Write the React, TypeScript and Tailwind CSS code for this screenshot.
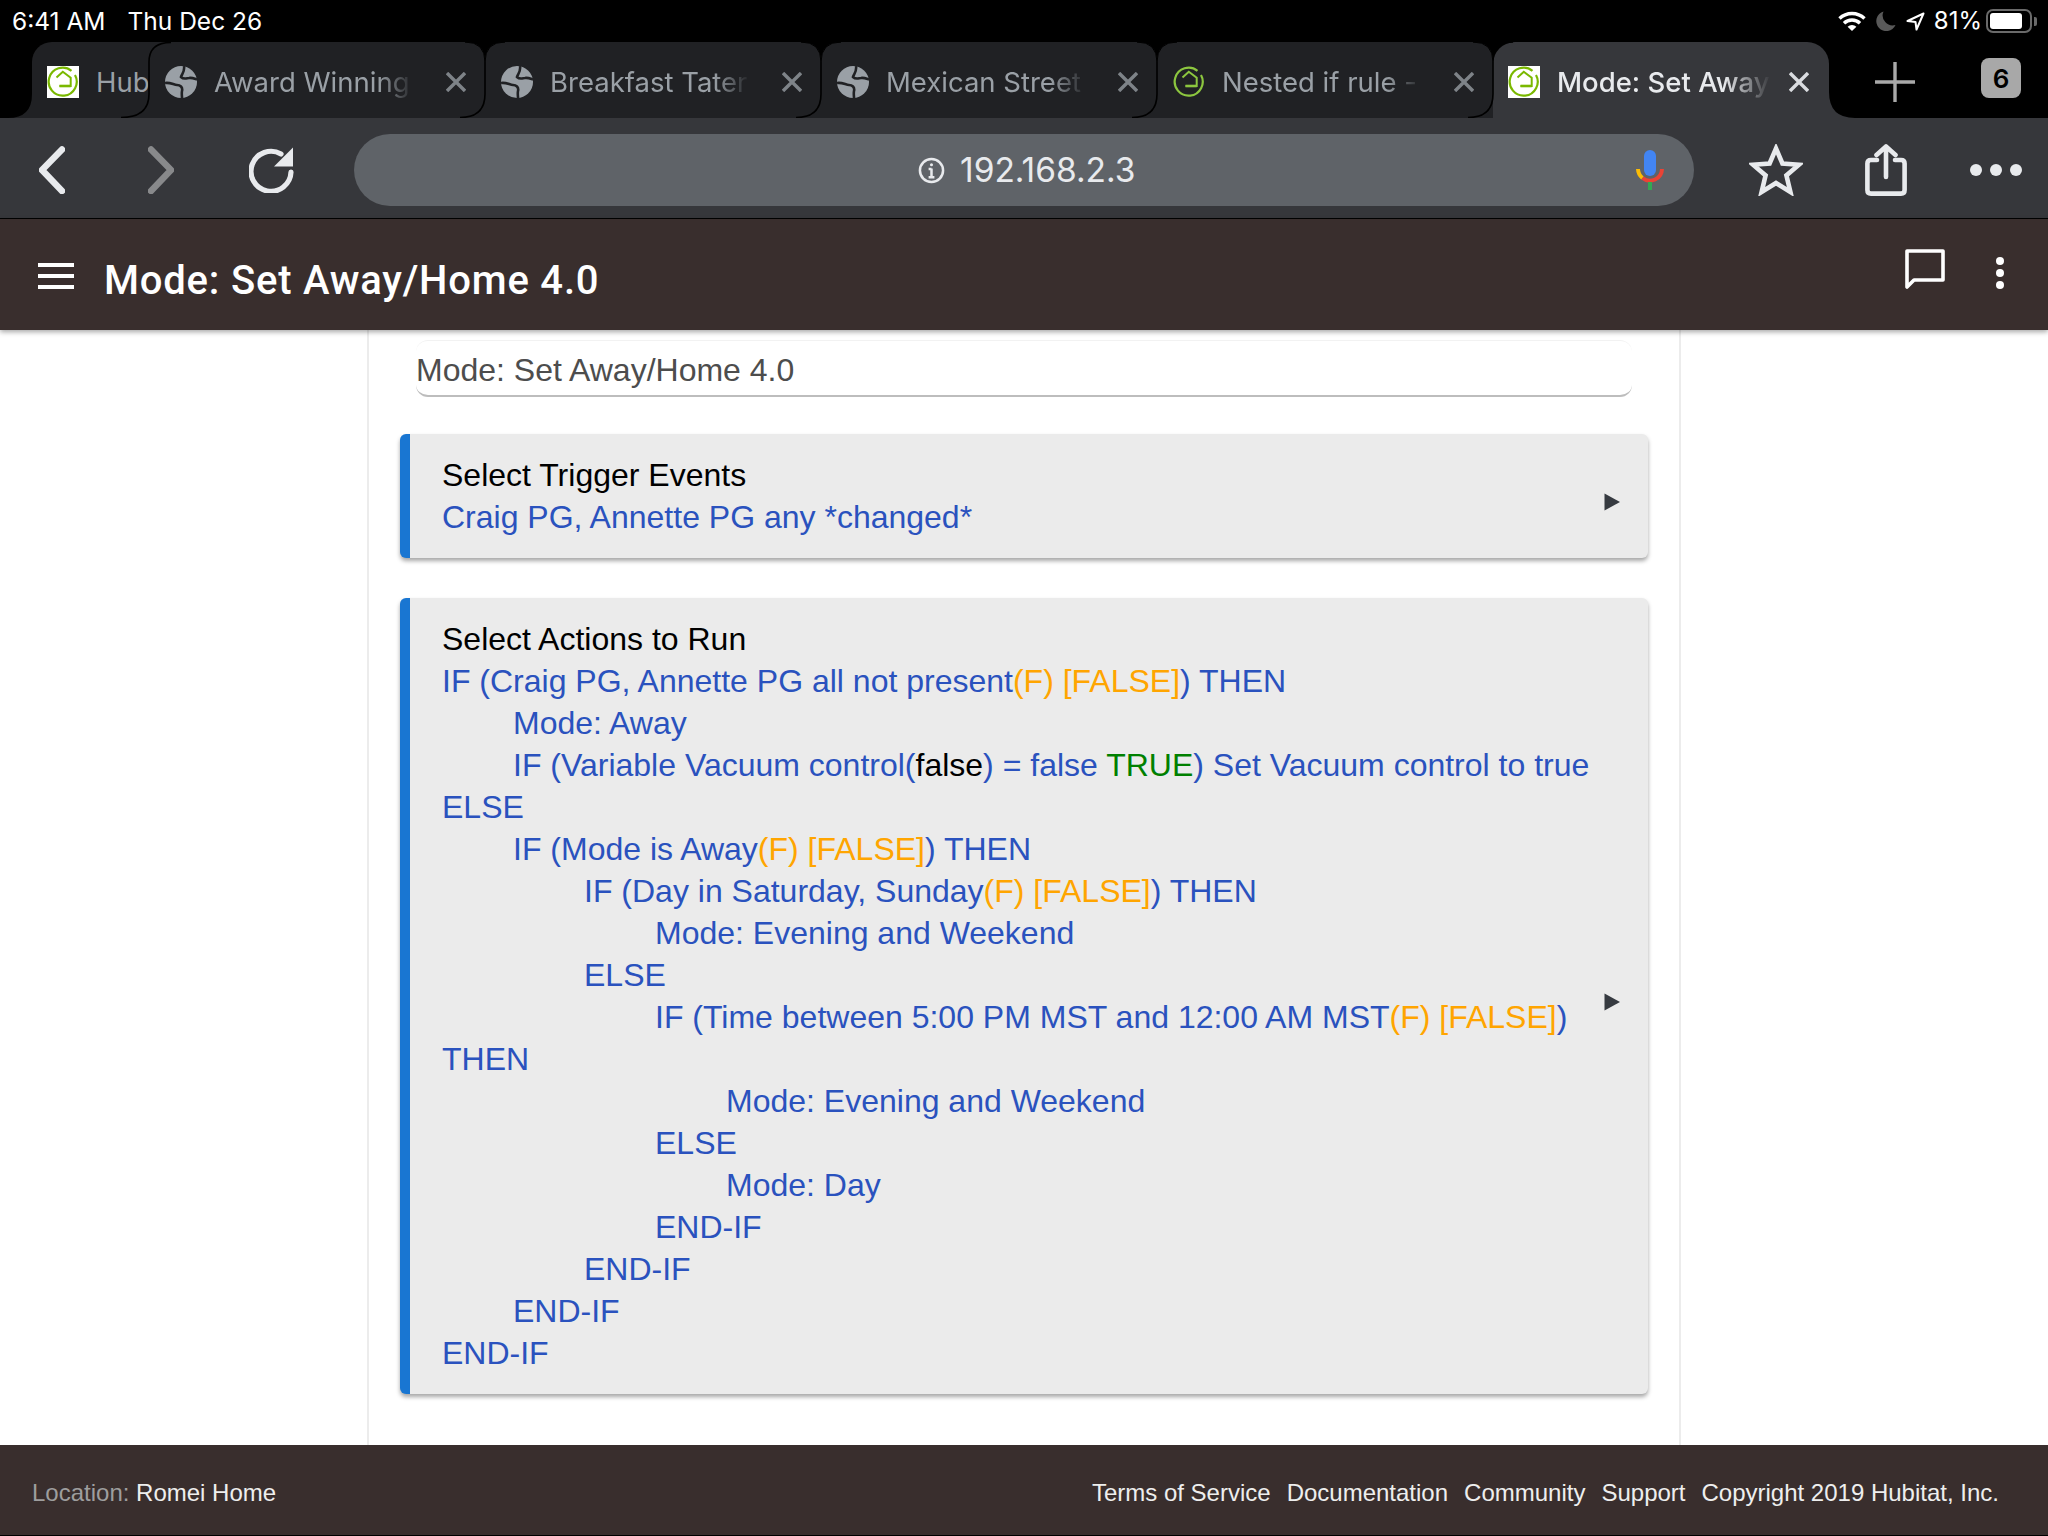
import React from "react";

function Favicon({ white, color }: { white?: boolean; color: string }) {
  return (
    <svg viewBox="0 0 32 32" className={white ? "w-[32px] h-[32px] flex-none bg-white" : "w-[32px] h-[32px] flex-none"} fill="none" stroke={color} strokeWidth="2">
      <path d="M24.5 4.8 A14 14 0 1 0 28 9" strokeWidth="2.2" />
      <path d="M9.5 11.5 L15.8 5.8 L23.7 11.8 V20 H12.5" />
      <path d="M12.5 20 H23.7" strokeWidth="2.6" />
    </svg>
  );
}

function Globe() {
  return (
    <svg viewBox="0 0 32 32" className="w-[32px] h-[32px] flex-none">
      <circle cx="16" cy="16" r="16" fill="#9aa0a6" />
      <path d="M19 0 C20 5 17 8 16 11 C19 14 22 12 24 12 C27 11.5 29 12.5 32 13.5" fill="none" stroke="#202124" strokeWidth="2.6" />
      <path d="M0 17 C5 16 9 19 12 19 C15 19 18 21 17 25 C16.5 27 17 30 17 32" fill="none" stroke="#202124" strokeWidth="2.6" />
    </svg>
  );
}

function CloseX({ color }: { color: string }) {
  return (
    <svg viewBox="0 0 20 20" className="w-[20px] h-[20px] flex-none" stroke={color} strokeWidth="3.4" fill="none">
      <path d="M1 1 L19 19 M19 1 L1 19" />
    </svg>
  );
}

function Separator({ notch }: { notch: boolean }) {
  return (
    <svg viewBox="0 0 60 76" className="absolute left-full top-0 -ml-[30px] w-[60px] h-[76px] z-10" fill="none">
      {notch ? <path d="M10 0 Q30 0 30 20 Q30 0 50 0 Z" fill="#000" stroke="#000" strokeWidth="1" /> : null}
      <path d={notch ? "M30 20 V52 Q30 75.5 5 75.5" : "M52 0.5 Q30 0.5 30 20 V52 Q30 75.5 2 75.5"} stroke="#000" strokeWidth="1.6" />
    </svg>
  );
}

const fadeText =
  "overflow-hidden whitespace-nowrap font-['Inter',sans-serif] text-[27.5px] leading-[36px] text-[#9aa0a6] [mask-image:linear-gradient(to_right,black_82%,transparent)]";

function Tab({ icon, label, textW, gap, notch }: { icon: React.ReactNode; label: string; textW: string; gap: string; notch: boolean }) {
  return (
    <div className="relative flex-none flex items-center w-[336px] h-full bg-[#202124] pl-[16px] pt-[3px]">
      {icon}
      <div className={"ml-[17px] " + textW + " " + fadeText}>{label}</div>
      <div className={gap}>
        <CloseX color="#7e8388" />
      </div>
      <Separator notch={notch} />
    </div>
  );
}

function Triangle() {
  return (
    <svg viewBox="0 0 16 18" className="w-[16px] h-[18px] flex-none mt-[12px]">
      <path d="M0.5 0.5 L16 9 L0.5 17.5 Z" fill="#363a40" />
    </svg>
  );
}

const B = ({ children }: { children: React.ReactNode }) => <span className="text-[#2a52be]">{children}</span>;
const O = ({ children }: { children: React.ReactNode }) => <span className="text-[#ffa500]">{children}</span>;

function Line({ children, className }: { children: React.ReactNode; className?: string }) {
  return <div className={"h-[42px] whitespace-nowrap " + (className || "")}>{children}</div>;
}

export default function App() {
  return (
    <div className="w-[2048px] h-[1536px] flex flex-col overflow-hidden bg-white font-['Liberation_Sans',sans-serif]">
      {/* status bar */}
      <div className="h-[42px] flex-none bg-black flex items-center pl-[12px] pr-[11px] font-['Inter',sans-serif] text-[24.5px] text-white">
        <span>6:41 AM</span>
        <span className="ml-[22px]">Thu Dec 26</span>
        <div className="ml-auto flex items-center">
          <svg viewBox="0 0 28 20" className="w-[28px] h-[20px]" fill="none" stroke="#fff" strokeWidth="3.4">
            <path d="M1.5 7.5 A18 18 0 0 1 26.5 7.5" />
            <path d="M6 12.3 A11.5 11.5 0 0 1 22 12.3" />
            <path d="M9.6 15.8 A6.5 6.5 0 0 1 18.4 15.8 L14 20 Z" fill="#fff" stroke="none" />
          </svg>
          <svg viewBox="0 0 20 20" className="w-[20px] h-[20px] ml-[10px]">
            <path d="M7.5 0.5 A10 10 0 1 0 19.5 14 A10 10 0 0 1 7.5 0.5 Z" fill="#595959" />
          </svg>
          <svg viewBox="0 0 19 19" className="w-[19px] h-[19px] ml-[10px]" fill="none" stroke="#fff" strokeWidth="2" strokeLinejoin="round">
            <path d="M17.5 1.5 L1.5 9 L9.5 10 L10.5 17.5 Z" />
          </svg>
          <span className="ml-[9px] text-[24px]">81%</span>
          <div className="ml-[4px] w-[46px] h-[24px] rounded-[7px] border-2 border-[#6a6a6a] p-[2px]">
            <div className="w-[32px] h-full rounded-[3px] bg-white" />
          </div>
          <div className="ml-[2px] w-[3px] h-[9px] rounded-r-[2px] bg-[#6a6a6a]" />
        </div>
      </div>

      {/* tab strip */}
      <div className="h-[76px] flex-none bg-black flex items-center pl-[32px]">
        <div className="relative flex-none flex items-center w-[117px] h-full bg-[#202124] rounded-tl-[20px] pl-[15px] pt-[3px]">
          <svg viewBox="0 0 24 24" className="absolute right-full bottom-0 w-[24px] h-[24px]">
            <path d="M24 0 Q24 24 0 24 H24 Z" fill="#202124" />
          </svg>
          <Favicon white color="#7ab800" />
          <div className="ml-[17px] overflow-hidden whitespace-nowrap font-['Inter',sans-serif] text-[27.5px] leading-[36px] text-[#9aa0a6]">Hub</div>
          <Separator notch={false} />
        </div>
        <Tab icon={<Globe />} label="Award Winning" textW="w-[200px]" gap="ml-[32px]" notch />
        <Tab icon={<Globe />} label="Breakfast Tater" textW="w-[200px]" gap="ml-[32px]" notch />
        <Tab icon={<Globe />} label="Mexican Street" textW="w-[200px]" gap="ml-[32px]" notch />
        <Tab icon={<Favicon color="#8cc63f" />} label="Nested if rule -" textW="w-[200px]" gap="ml-[32px]" notch />
        <div className="relative flex-none flex items-center w-[336px] h-full bg-[#36373b] rounded-t-[22px] pl-[15px] pt-[3px]">
          <Favicon white color="#7ab800" />
          <div className="ml-[17px] w-[214px] overflow-hidden whitespace-nowrap font-['Inter',sans-serif] text-[27.5px] font-medium leading-[36px] text-[#e8eaed] [mask-image:linear-gradient(to_right,black_78%,transparent)]">
            Mode: Set Away
          </div>
          <div className="ml-[18px]">
            <CloseX color="#dadce0" />
          </div>
          <svg viewBox="0 0 26 26" className="absolute left-full bottom-0 w-[26px] h-[26px]">
            <path d="M0 0 Q0 26 26 26 H0 Z" fill="#36373b" />
          </svg>
        </div>
        <svg viewBox="0 0 40 40" className="w-[40px] h-[40px] ml-[46px] mt-[4px] flex-none" stroke="#a9a9a9" strokeWidth="3.4">
          <path d="M20 0 V40 M0 20 H40" />
        </svg>
        <div className="ml-[66px] mb-[4px] flex-none w-[40px] h-[40px] rounded-[8px] bg-[#a8a8a8] flex items-center justify-center font-['Inter',sans-serif] text-[26px] font-semibold text-black">
          6
        </div>
      </div>

      {/* browser toolbar */}
      <div className="h-[101px] flex-none bg-[#36373b] border-b border-black flex items-center pl-[39px] pt-[4px]">
        <svg viewBox="0 0 26 48" className="w-[26px] h-[48px] flex-none" fill="none" stroke="#e8eaed" strokeWidth="6.5" strokeLinecap="round" strokeLinejoin="round">
          <path d="M23 3.5 L3 24 L23 45" />
        </svg>
        <svg viewBox="0 0 26 48" className="w-[26px] h-[48px] ml-[83px] flex-none" fill="none" stroke="#88898b" strokeWidth="6.5" strokeLinecap="round" strokeLinejoin="round">
          <path d="M3 3.5 L23 24 L3 45" />
        </svg>
        <svg viewBox="0 0 46 46" className="w-[46px] h-[46px] ml-[75px] flex-none" fill="none">
          <path d="M32 7 A20 20 0 1 0 42 25" stroke="#e8eaed" strokeWidth="5.2" strokeLinecap="round" />
          <path d="M44 0.5 V19.5 H25 Z" fill="#e8eaed" />
        </svg>
        <div className="ml-[59px] flex-none w-[1340px] h-[72px] rounded-full bg-[#5f6368] flex items-center pl-[564px]">
          <svg viewBox="0 0 28 28" className="w-[27px] h-[27px] flex-none" fill="none" stroke="#e8eaed" strokeWidth="2.6">
            <circle cx="14" cy="14" r="12" />
            <path d="M14 12 V21 M11 12.5 H14 M11 21 H17" />
            <circle cx="14" cy="8" r="1.6" fill="#e8eaed" stroke="none" />
          </svg>
          <span className="ml-[15px] font-['Inter',sans-serif] text-[33.5px] text-[#e8eaed]">192.168.2.3</span>
          <svg viewBox="0 0 28 42" className="w-[28px] h-[42px] ml-auto mr-[30px] flex-none" fill="none">
            <rect x="8" y="1" width="12" height="26" rx="6" fill="#4285f4" />
            <path d="M2 20 A12 12 0 0 0 6.5 29" stroke="#fbbc05" strokeWidth="4" />
            <path d="M6.5 29 A12 12 0 0 0 26 20" stroke="#ea4335" strokeWidth="4" />
            <rect x="12" y="33" width="4" height="8" fill="#34a853" />
          </svg>
        </div>
        <svg viewBox="0 0 54 52" className="w-[54px] h-[52px] ml-[55px] flex-none" fill="none" stroke="#e8eaed" strokeWidth="4.6" strokeLinejoin="miter">
          <path d="M27 4.5 L33.4 19.5 L50 20.7 L37.4 31.4 L41.4 48 L27 39 L12.6 48 L16.6 31.4 L4 20.7 L20.6 19.5 Z" />
        </svg>
        <svg viewBox="0 0 42 52" className="w-[42px] h-[52px] ml-[62px] flex-none" fill="none" stroke="#e8eaed" strokeWidth="4.6" strokeLinecap="round" strokeLinejoin="round">
          <path d="M12 16 H6 Q2.4 16 2.4 19.5 V46 Q2.4 49.6 6 49.6 H36 Q39.6 49.6 39.6 46 V19.5 Q39.6 16 36 16 H30" />
          <path d="M21 33 V2.5 M11.5 11 L21 2.5 L30.5 11" />
        </svg>
        <div className="ml-[63px] flex-none flex items-center gap-[8px]">
          <div className="w-[12px] h-[12px] rounded-full bg-[#e8eaed]" />
          <div className="w-[12px] h-[12px] rounded-full bg-[#e8eaed]" />
          <div className="w-[12px] h-[12px] rounded-full bg-[#e8eaed]" />
        </div>
      </div>

      {/* app bar */}
      <div className="relative z-20 h-[111px] flex-none bg-[#392e2d] shadow-[0_2px_5px_rgba(0,0,0,0.35)] flex items-center pl-[38px] pr-[44px] pt-[10px]">
        <svg viewBox="0 0 36 26" className="w-[36px] h-[26px] flex-none mb-[8px]" fill="#fff">
          <rect y="0" width="36" height="4" />
          <rect y="11" width="36" height="4" />
          <rect y="22" width="36" height="4" />
        </svg>
        <div className="ml-[30px] mt-[2px] font-['Roboto',sans-serif] font-medium text-[40px] leading-[48px] tracking-[0.8px] text-white">Mode: Set Away/Home 4.0</div>
        <svg viewBox="0 0 40 42" className="w-[40px] h-[42px] ml-auto mb-[20px] flex-none" fill="none" stroke="#fff" strokeWidth="3.6" strokeLinejoin="round">
          <path d="M2 2 H38 V31 H9 L2 38 Z" />
        </svg>
        <div className="ml-[51px] mb-[14px] flex-none flex flex-col gap-[4px]">
          <div className="w-[8px] h-[8px] rounded-full bg-white" />
          <div className="w-[8px] h-[8px] rounded-full bg-white" />
          <div className="w-[8px] h-[8px] rounded-full bg-white" />
        </div>
      </div>

      {/* content */}
      <div className="flex-1 min-h-0 overflow-hidden bg-white">
        <div className="ml-[367px] w-[1314px] h-full border-x-2 border-[#ececec] pl-[31px] pr-[31px] pt-[10px] text-[32px] leading-[42px]">
          <div className="ml-[16px] mr-[16px] h-[57px] rounded-[12px] border-t border-[#f2f2f2] border-b-2 border-b-[#bdbdbd] text-[#4d4d4d] flex items-center pt-[3px]">
            Mode: Set Away/Home 4.0
          </div>

          <div className="mt-[37px] flex items-center rounded-[6px] border-l-[10px] border-[#1976d2] bg-[#ebebeb] pl-[32px] pr-[28px] py-[20px] shadow-[0_3px_4px_rgba(0,0,0,0.35)]">
            <div className="flex-1 min-w-0">
              <Line className="text-black">Select Trigger Events</Line>
              <Line><B>Craig PG, Annette PG any *changed*</B></Line>
            </div>
            <Triangle />
          </div>

          <div className="mt-[40px] flex items-center rounded-[6px] border-l-[10px] border-[#1976d2] bg-[#ebebeb] pl-[32px] pr-[28px] py-[20px] shadow-[0_3px_4px_rgba(0,0,0,0.35)]">
            <div className="flex-1 min-w-0">
              <Line className="text-black">Select Actions to Run</Line>
              <Line><B>IF (Craig PG, Annette PG all not present</B><O>(F) [FALSE]</O><B>) THEN</B></Line>
              <Line className="pl-[71px]"><B>Mode: Away</B></Line>
              <Line className="pl-[71px]">
                <B>IF (Variable Vacuum control(</B>
                <span className="text-black">false</span>
                <B>) = false </B>
                <span className="text-[#008000]">TRUE</span>
                <B>) Set Vacuum control to true</B>
              </Line>
              <Line><B>ELSE</B></Line>
              <Line className="pl-[71px]"><B>IF (Mode is Away</B><O>(F) [FALSE]</O><B>) THEN</B></Line>
              <Line className="pl-[142px]"><B>IF (Day in Saturday, Sunday</B><O>(F) [FALSE]</O><B>) THEN</B></Line>
              <Line className="pl-[213px]"><B>Mode: Evening and Weekend</B></Line>
              <Line className="pl-[142px]"><B>ELSE</B></Line>
              <Line className="pl-[213px]"><B>IF (Time between 5:00 PM MST and 12:00 AM MST</B><O>(F) [FALSE]</O><B>)</B></Line>
              <Line><B>THEN</B></Line>
              <Line className="pl-[284px]"><B>Mode: Evening and Weekend</B></Line>
              <Line className="pl-[213px]"><B>ELSE</B></Line>
              <Line className="pl-[284px]"><B>Mode: Day</B></Line>
              <Line className="pl-[213px]"><B>END-IF</B></Line>
              <Line className="pl-[142px]"><B>END-IF</B></Line>
              <Line className="pl-[71px]"><B>END-IF</B></Line>
              <Line><B>END-IF</B></Line>
            </div>
            <Triangle />
          </div>
        </div>
      </div>

      {/* footer */}
      <div className="h-[91px] flex-none bg-[#392e2d] border-b border-black flex items-center pl-[32px] pr-[49px] pt-[6px] text-[24px] text-[#eeeeee]">
        <span className="text-[#9e9e9e]">Location:&nbsp;</span>
        <span>Romei Home</span>
        <div className="ml-auto flex items-center gap-[16px]">
          <span>Terms of Service</span>
          <span>Documentation</span>
          <span>Community</span>
          <span>Support</span>
          <span>Copyright 2019 Hubitat, Inc.</span>
        </div>
      </div>
    </div>
  );
}
